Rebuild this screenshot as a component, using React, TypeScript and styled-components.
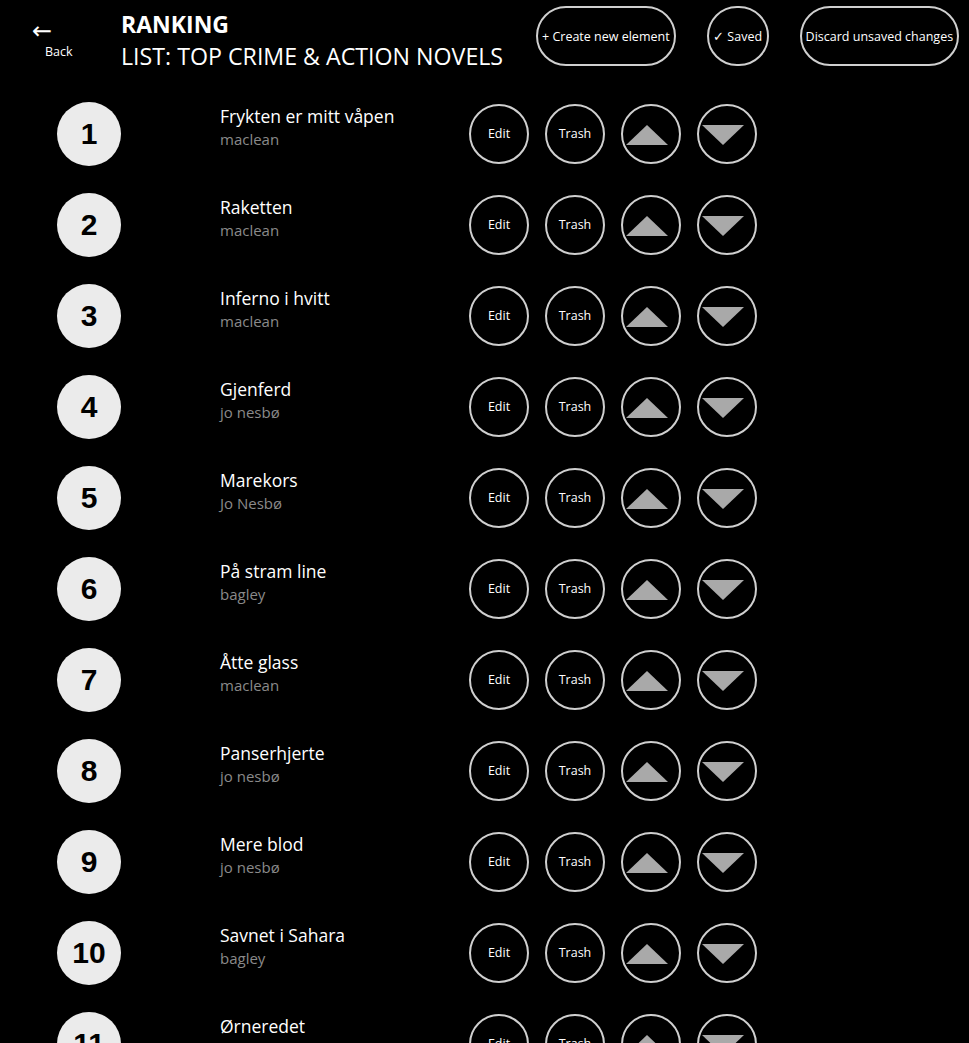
import styled, { createGlobalStyle } from "styled-components";

type Novel = {
  title: string;
  author: string;
};

const novels: Novel[] = [
  { title: "Frykten er mitt våpen", author: "maclean" },
  { title: "Raketten", author: "maclean" },
  { title: "Inferno i hvitt", author: "maclean" },
  { title: "Gjenferd", author: "jo nesbø" },
  { title: "Marekors", author: "Jo Nesbø" },
  { title: "På stram line", author: "bagley" },
  { title: "Åtte glass", author: "maclean" },
  { title: "Panserhjerte", author: "jo nesbø" },
  { title: "Mere blod", author: "jo nesbø" },
  { title: "Savnet i Sahara", author: "bagley" },
  { title: "Ørneredet", author: "maclean" },
];

const GlobalStyle = createGlobalStyle`
  html, body {
    margin: 0;
    padding: 0;
    background: #000;
    color: #fff;
    font-family: "Open Sans", "Noto Sans", sans-serif;
  }
`;

const Page = styled.div`
  background: #000;
  min-height: 100vh;
  overflow: hidden;
`;

const Header = styled.header`
  display: flex;
  align-items: flex-start;
  height: 88px;
  box-sizing: border-box;
`;

const BackButton = styled.button`
  display: flex;
  flex-direction: column;
  align-items: flex-start;
  background: none;
  border: none;
  color: #fff;
  font-family: inherit;
  padding: 19px 0 0 32px;
  width: 121px;
  cursor: pointer;
`;

const BackArrow = styled.span`
  font-family: "DejaVu Sans", sans-serif;
  font-size: 24px;
  line-height: 24px;
`;

const BackLabel = styled.span`
  font-size: 12.5px;
  line-height: 16px;
  margin-left: 13px;
  margin-top: 1px;
`;

const Titles = styled.div`
  display: flex;
  flex-direction: column;
  padding-top: 8px;
  width: 415px;
`;

const Heading = styled.h1`
  margin: 0;
  font-size: 23px;
  line-height: 32px;
  font-weight: 700;
`;

const SubHeading = styled.h2`
  margin: 0;
  font-size: 23.2px;
  line-height: 32px;
  font-weight: 400;
`;

const HeaderActions = styled.div`
  display: flex;
  gap: 31px;
  padding-top: 6px;
`;

const PillButton = styled.button`
  min-width: 62px;
  height: 60px;
  padding: 0 4px;
  border: 2px solid #cfcfcf;
  border-radius: 30px;
  background: #000;
  color: #fff;
  font-family: inherit;
  font-size: 12.5px;
  white-space: nowrap;
  cursor: pointer;
`;

const List = styled.ol`
  list-style: none;
  margin: 0;
  padding: 0;
`;

const Row = styled.li`
  display: flex;
  align-items: center;
  height: 91px;
  padding-left: 57px;
`;

const Rank = styled.div`
  width: 64px;
  height: 64px;
  border-radius: 50%;
  background: #ebebeb;
  color: #000;
  display: flex;
  align-items: center;
  justify-content: center;
  font-family: "Liberation Sans", Arial, sans-serif;
  font-weight: 700;
  font-size: 30px;
  flex-shrink: 0;
`;

const Info = styled.div`
  align-self: flex-start;
  padding-top: 16px;
  margin-left: 99px;
  width: 249px;
  display: flex;
  flex-direction: column;
`;

const Title = styled.span`
  font-size: 17.5px;
  line-height: 24px;
  color: #fff;
`;

const Author = styled.span`
  font-size: 15px;
  line-height: 22px;
  color: #8a8a8a;
`;

const Actions = styled.div`
  display: flex;
  gap: 16px;
`;

const RoundButton = styled.button`
  width: 60px;
  height: 60px;
  border-radius: 50%;
  border: 2px solid #cfcfcf;
  background: #000;
  color: #fff;
  font-family: inherit;
  font-size: 12.5px;
  display: flex;
  align-items: center;
  justify-content: center;
  padding: 0;
  cursor: pointer;
`;

const Triangle = styled.span<{ $down?: boolean }>`
  width: 0;
  height: 0;
  margin-right: 8px;
  margin-top: 2px;
  border-left: 21px solid transparent;
  border-right: 21px solid transparent;
  ${({ $down }) =>
    $down ? "border-top: 20px solid #a9a9a9;" : "border-bottom: 20px solid #a9a9a9;"}
`;

export default function App() {
  return (
    <Page>
      <GlobalStyle />
      <Header>
        <BackButton>
          <BackArrow>←</BackArrow>
          <BackLabel>Back</BackLabel>
        </BackButton>
        <Titles>
          <Heading>RANKING</Heading>
          <SubHeading>LIST: TOP CRIME &amp; ACTION NOVELS</SubHeading>
        </Titles>
        <HeaderActions>
          <PillButton>+ Create new element</PillButton>
          <PillButton>✓ Saved</PillButton>
          <PillButton>Discard unsaved changes</PillButton>
        </HeaderActions>
      </Header>
      <List>
        {novels.map((novel, index) => (
          <Row key={index}>
            <Rank>{index + 1}</Rank>
            <Info>
              <Title>{novel.title}</Title>
              <Author>{novel.author}</Author>
            </Info>
            <Actions>
              <RoundButton>Edit</RoundButton>
              <RoundButton>Trash</RoundButton>
              <RoundButton>
                <Triangle />
              </RoundButton>
              <RoundButton>
                <Triangle $down />
              </RoundButton>
            </Actions>
          </Row>
        ))}
      </List>
    </Page>
  );
}
